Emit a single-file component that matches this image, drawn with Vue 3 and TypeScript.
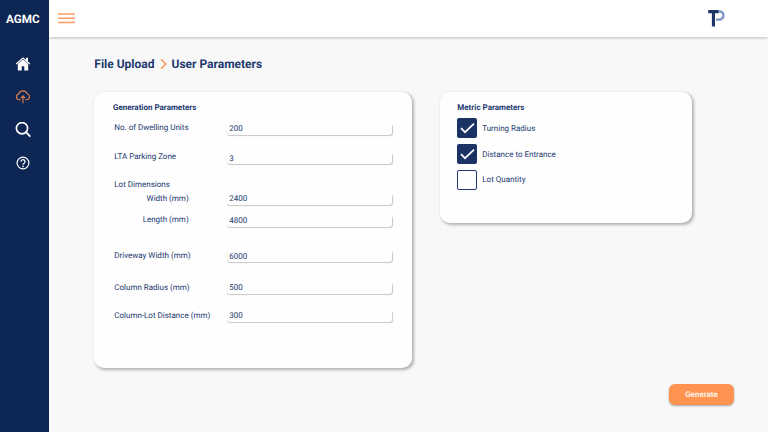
<script setup lang="ts">
import { ref } from 'vue'

interface Field {
  id: string
  label: string
  value?: string
  sub?: boolean
}

const fields = ref<Field[]>([
  { id: 'units', label: 'No. of Dwelling Units', value: '200' },
  { id: 'zone', label: 'LTA Parking Zone', value: '3' },
  { id: 'lot', label: 'Lot Dimensions' },
  { id: 'width', label: 'Width (mm)', value: '2400', sub: true },
  { id: 'length', label: 'Length (mm)', value: '4800', sub: true },
  { id: 'driveway', label: 'Driveway Width (mm)', value: '6000' },
  { id: 'radius', label: 'Column Radius (mm)', value: '500' },
  { id: 'distance', label: 'Column-Lot Distance (mm)', value: '300' },
])

const metrics = ref([
  { label: 'Turning Radius', checked: true },
  { label: 'Distance to Entrance', checked: true },
  { label: 'Lot Quantity', checked: false },
])
</script>

<template>
  <div class="app">
    <aside class="sidebar">
      <div class="brand">AGMC</div>
      <nav class="nav">
        <svg class="icon" viewBox="0 0 16 16" width="16" height="16">
          <path d="M8 3.4 2.8 8v6.4h3.9v-4.2h2.6v4.2h3.9V8z" fill="#fff" />
          <path d="M11 1.8h2v4.4l-2-1.8z" fill="#fff" />
          <path d="M1.2 8 8 2l6.800 6" fill="none" stroke="#fff" stroke-width="1.300" />
        </svg>
        <svg class="icon" viewBox="0 0 16 16" width="16" height="16">
          <path d="M5.900 10.700H4.200A2.900 2.900 0 0 1 3.600 5a4.500 4.500 0 0 1 8.500-.2 3 3 0 0 1-.2 5.900h-1.600M8 14.300V7M5.800 9.100 8 6.900l2.200 2.200" fill="none" stroke="#d87d50" stroke-width="1.150" />
        </svg>
        <svg class="icon" viewBox="0 0 16 16" width="16" height="16">
          <circle cx="7" cy="6.200" r="5.600" fill="none" stroke="#fff" stroke-width="1.700" />
          <path d="m10.900 10.200 4.500 4.500" stroke="#fff" stroke-width="1.900" />
        </svg>
        <svg class="icon" viewBox="0 0 16 16" width="16" height="16">
          <circle cx="8" cy="8" r="5.900" fill="none" stroke="#fff" stroke-width="1.200" />
          <path d="M6 6.700a2 2 0 1 1 3.100 1.600C8.400 8.700 8 9 8 9.700" fill="none" stroke="#fff" stroke-width="1.200" />
          <circle cx="8" cy="11.400" r=".8" fill="#fff" />
        </svg>
      </nav>
    </aside>

    <div class="main">
      <header class="topbar">
        <button class="menu" aria-label="Menu">
          <svg viewBox="0 0 17 12" width="17" height="12">
            <path d="M0 .9h17M0 5.300h17M0 9.600h17" stroke="#ff9b62" stroke-width="1.500" />
          </svg>
        </button>
        <svg class="logo" viewBox="0 0 18 18" width="18" height="18">
          <path d="M10 2.200h2.200a4.200 4.200 0 0 1 0 8.400H9" fill="none" stroke="#7d95cb" stroke-width="2.400" />
          <path d="M1.200.900h8.400q1.600 0 2 1.300v2.100H8V17.600H4.900V4.300H1.200z" fill="#1e3667" />
        </svg>
      </header>

      <main class="content">
        <h1 class="crumbs">
          <span>File Upload</span>
          <svg class="chevron" viewBox="0 0 7 10" width="7" height="10">
            <path d="m1 .3 4.800 4.700L1 9.700" fill="none" stroke="#ff9454" stroke-width="1.500" />
          </svg>
          <span>User Parameters</span>
        </h1>

        <div class="cards">
          <section class="card generation">
            <h2>Generation Parameters</h2>
            <div v-for="f in fields" :key="f.id" class="row" :class="[f.id, { sub: f.sub }]">
              <span class="label">{{ f.label }}</span>
              <span v-if="f.value" class="field"><span class="value">{{ f.value }}</span></span>
            </div>
          </section>

          <section class="card metric">
            <h2>Metric Parameters</h2>
            <div v-for="m in metrics" :key="m.label" class="check-row" @click="m.checked = !m.checked">
              <span class="box" :class="{ checked: m.checked }">
                <svg v-if="m.checked" viewBox="0 0 20 20" width="20" height="20">
                  <path d="m4 10.200 4 4 9-8.500" fill="none" stroke="#fff" stroke-width="1.700" />
                </svg>
              </span>
              <span>{{ m.label }}</span>
            </div>
          </section>
        </div>

        <button class="generate">Generate</button>
      </main>
    </div>
  </div>
</template>

<style>
body {
  margin: 0;
}
</style>

<style scoped>
.app {
  display: flex;
  width: 768px;
  height: 432px;
  overflow: hidden;
  background: #f8f8f8;
  color: #21386e;
  font-family: Roboto, sans-serif;
  text-rendering: geometricPrecision;
}
.sidebar {
  width: 49px;
  flex: none;
  background: #0e2653;
}
.brand {
  padding: 12px 0 0 6px;
  color: #fff;
  font-size: 11.700px;
  font-weight: 700;
  line-height: 15px;
}
.nav {
  display: flex;
  flex-direction: column;
  gap: 17px;
  padding: 29px 0 0 15px;
}
.icon {
  display: block;
}
.main {
  display: flex;
  flex: 1;
  flex-direction: column;
}
.topbar {
  display: flex;
  flex: none;
  box-sizing: border-box;
  height: 37px;
  justify-content: space-between;
  padding: 9px 43px 0 9px;
  background: #fff;
  box-shadow: 0 1px 3px rgba(0, 0, 0, 0.24);
}
.menu {
  display: block;
  width: 17px;
  height: 12px;
  margin: 4px 0 0;
  padding: 0;
  border: 0;
  background: none;
}
.menu svg {
  display: block;
}
.content {
  display: flex;
  flex: 1;
  flex-direction: column;
  padding: 19px 34px 0 45.300px;
}
.crumbs {
  display: flex;
  align-items: center;
  height: 16px;
  margin: 0;
  font-size: 12px;
  font-weight: 700;
}
.chevron {
  margin: 0 4px 0 6px;
}
.cards {
  display: flex;
  align-items: flex-start;
  gap: 28px;
  padding-top: 20.400px;
}
.card {
  box-sizing: border-box;
  border-radius: 10px;
  background: #fefefe;
  box-shadow: 1.500px 1.500px 3px rgba(0, 0, 0, 0.28);
}
.card h2 {
  margin: 0;
  font-size: 8px;
  font-weight: 700;
  line-height: 12px;
}
.generation {
  width: 318px;
  height: 276px;
  padding: 9.500px 20.500px 0 18.700px;
}
.row {
  display: flex;
  height: 12px;
  padding-left: 1.300px;
  font-size: 8px;
  line-height: 12px;
}
.label {
  width: 112.400px;
  flex: none;
  white-space: nowrap;
}
.sub .label {
  box-sizing: border-box;
  padding-right: 38px;
  text-align: right;
}
.field {
  flex: 1;
  padding-left: 2.500px;
  border-radius: 3px;
  box-shadow: 0.7px 1px 1px rgba(0, 0, 0, 0.22);
}
.units {
  margin-top: 9.500px;
}
.zone {
  margin-top: 16.500px;
}
.lot {
  margin-top: 15.500px;
}
.width {
  margin-top: 2px;
}
.length {
  margin-top: 9.500px;
}
.driveway {
  margin-top: 23.500px;
}
.radius {
  margin-top: 19.500px;
}
.distance {
  margin-top: 16.500px;
}
.units .label,
.zone .label,
.length .label {
  margin-top: -1px;
}
.zone .field,
.driveway .field {
  line-height: 14px;
}
.metric {
  width: 252px;
  height: 131px;
  padding: 9.500px 17px 0 17px;
}
.check-row {
  display: flex;
  align-items: center;
  gap: 5px;
  height: 20px;
  margin-top: 5.600px;
  font-size: 8px;
}
.metric h2 + .check-row {
  margin-top: 4.600px;
}
.box {
  box-sizing: border-box;
  width: 20px;
  height: 20px;
  border: 1px solid #21386e;
  border-radius: 2px;
}
.box.checked {
  border: 0;
  background: #1b3364;
}
.box svg {
  display: block;
}
.generate {
  align-self: flex-end;
  width: 65px;
  height: 21px;
  margin-top: 15.500px;
  padding: 0;
  border: 0;
  border-radius: 6px;
  background: #ff934f;
  box-shadow: 0 1px 2px rgba(0, 0, 0, 0.35);
  color: #fff2e8;
  font: 700 8px Roboto, sans-serif;
  text-rendering: geometricPrecision;
}
</style>
